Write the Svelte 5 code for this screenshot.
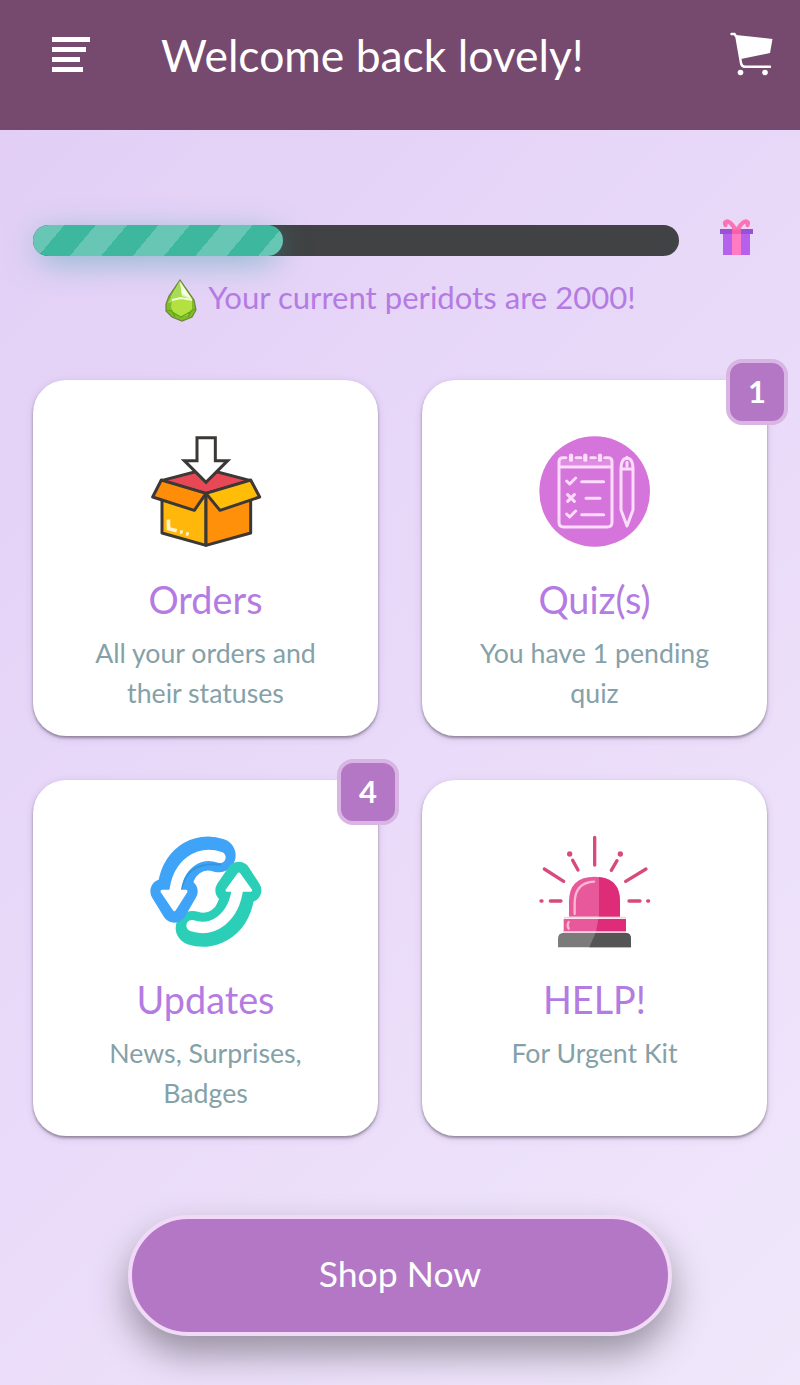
<script>
  let peridots = 2000;
  let progress = 38.7;

  let cards = [
    { icon: 'orders', title: 'Orders', text: 'All your orders and their statuses', badge: 0 },
    { icon: 'quiz', title: 'Quiz(s)', text: 'You have 1 pending quiz', badge: 1 },
    { icon: 'updates', title: 'Updates', text: 'News, Surprises, Badges', badge: 4 },
    { icon: 'help', title: 'HELP!', text: 'For Urgent Kit', badge: 0 }
  ];
</script>

<div class="page">
  <header>
    <button class="menu" aria-label="Menu">
      <svg width="40" height="38" viewBox="0 0 40 38" fill="#fff">
        <path d="M0 1h38v5H0zM0 11h34v5H0zM0 21h28v5H0zM0 31h31v5H0z" />
      </svg>
    </button>
    <h1>Welcome back lovely!</h1>
    <button class="cart" aria-label="Cart">
      <svg width="44" height="44" viewBox="0 0 44 44">
        <path d="M7 2 43.500 6 41 20 12 26z" fill="#fff" />
        <path d="M2.500 1h3l2 3 4.500 26q.5 3.700 4 3.700h25" fill="none" stroke="#fff" stroke-width="2.400" stroke-linecap="round" />
        <circle cx="11.500" cy="39.500" r="2.800" fill="#fff" />
        <circle cx="36" cy="39.500" r="2.800" fill="#fff" />
      </svg>
    </button>
  </header>

  <main>
    <div class="reward">
      <div class="track">
        <div class="fill" style="width: {progress}%"></div>
      </div>
      <svg class="gift" width="34" height="37" viewBox="0 0 34 37">
        <path d="M3 13h27v23H3z" fill="#b660ee" />
        <path d="M0 10h33v5H0z" fill="#9b51d5" />
        <path d="M12 9h9v27h-9z" fill="#ff7cc4" />
        <path d="M12 9h9v6h-9z" fill="#ef62ac" />
        <path d="M14.500 9Q10 2 6.500 2.500 4 3 5.500 6M18.500 9Q23 2 26.500 2.500 29 3 27.500 6" fill="none" stroke="#ff70b5" stroke-width="4.200" stroke-linecap="round" />
      </svg>
    </div>

    <p class="peridots">
      <svg width="34" height="43" viewBox="0 0 34 43">
        <path d="M16 1 5 17 2 25 2 32 8 38 18 42 28 38 32 31 30 21z" fill="#82bd27" stroke="#70823f" stroke-width="1.200" />
        <path d="M16 2 7 18 17 17 28 21z" fill="#d7f4a0" />
        <path d="M16 2 9 15 4 24 9 23 18 19z" fill="#a7dd54" />
        <path d="m16 3 2 12 10 5z" fill="#f5ffe5" />
        <path d="m8 22 9-2 11 2v8l-4 6-8 2-7-4-2-6z" fill="#b3e13f" />
        <path d="m8 21 9-2 11 2" fill="none" stroke="#f4ffd9" stroke-width="1.800" />
        <path d="m2 31 6 1 3 6M31 30l-4 2-3 6M8 33l9 5 9-5" fill="none" stroke="#5fa41a" stroke-width="1.200" />
      </svg>
      <span>Your current peridots are {peridots}!</span>
    </p>

    <section class="grid">
      {#each cards as card}
        <article class="card">
          {#if card.badge}
            <span class="badge">{card.badge}</span>
          {/if}

          {#if card.icon === 'orders'}
            <svg class="icon" viewBox="30 33 333 333">
              <g stroke="#3b3835" stroke-width="9" stroke-linejoin="round">
                <path d="m66 222 132-15v154L66 324z" fill="#ffb70b" />
                <path d="m198 207 134 15v102l-134 37z" fill="#ff9009" />
                <path d="m64 167 134-35 134 35-134 38z" fill="#e84855" />
                <path d="M64 165 198 205 163 256 38 216z" fill="#ff8d08" />
                <path d="M332 165 198 205l42 51 119-40z" fill="#ffbd08" />
                <path d="M171 38h55v69h37l-65 65-65-65h38z" fill="#fff" stroke-linejoin="miter" />
              </g>
              <path d="m85 284 1 27 24 6M120 320l8 2M138 326l8 2" fill="none" stroke="#fff3cc" stroke-width="11" />
            </svg>
          {:else if card.icon === 'quiz'}
            <svg class="icon" viewBox="27 33 333 333">
              <circle cx="194" cy="199.500" r="166" fill="#d574da" />
              <path d="M87 104h159v22H87z" fill="#e7a5e9" opacity=".5" />
              <g fill="none" stroke="#fbdcfb" stroke-width="9" stroke-linecap="round" stroke-linejoin="round">
                <path d="M108 98h-9q-12 0-12 12v182q0 14 14 14h131q14 0 14-14V110q0-12-12-12h-10M138 98h15M182 98h14M88 126h157" />
                <path d="M123 92v12M166 92v12M210 92v12" stroke-width="13" />
                <path d="m110 168 9 9 18-18M155 170h66M113 209l20 20M133 209l-20 20M168 220h42M110 267l9 9 18-18M155 269h66" />
                <path d="M273 134q0-34 18-34t18 34v121l-18 48-18-48zM273 132h36M291 100v-3" />
                <path d="M291 112v12" />
              </g>
            </svg>
          {:else if card.icon === 'updates'}
            <svg class="icon" viewBox="30 33 333 333">
              <g fill="none" stroke-linecap="round" stroke-linejoin="round">
                <g stroke="#2bcfb7">
                  <path d="M158 309C218 329 286 292 294 196" stroke-width="102" />
                </g>
                <g stroke="#3fa4f8">
                  <path d="M236 91C176 71 108 107 102 204" stroke-width="102" />
                  <path d="m68 199 35 57 33-57z" fill="#3fa4f8" stroke-width="74" />
                </g>
                <g stroke="#2bcfb7">
                  <path d="M293 196q-3 32-16 52" stroke-width="94" />
                  <path d="m262 196 34-50 32 50z" fill="#2bcfb7" stroke-width="72" />
                </g>
                <g stroke="#157fb5" opacity=".35" stroke-width="6">
                  <path d="M125 190q17-81 116-71" />
                </g>
                <g stroke="#fff">
                  <path d="M240 97C180 77 112 112 104 208" stroke-width="34" />
                  <path d="m66 199 37 55 35-55z" fill="#fff" stroke-width="9" />
                  <path d="M156 302C216 322 282 282 293 188" stroke-width="34" />
                  <path d="m261 196 36-49 35 49z" fill="#fff" stroke-width="9" />
                </g>
              </g>
            </svg>
          {:else}
            <svg class="icon" viewBox="27 33 333 333">
              <path d="M117 275v-45q0-75 77-75t76 75v45z" fill="#e8599b" />
              <path d="M207 156q63 7 63 74v45h-63z" fill="#df2c78" />
              <path d="M101 282h187v38H101z" fill="#e8599b" />
              <path d="M205 282h83v38h-90z" fill="#df2c78" />
              <path d="M84 367v-26q0-18 18-18h184q17 0 17 18v26z" fill="#7b7b7b" />
              <path d="M197 323h89q17 0 17 18v26H178z" fill="#555" />
              <path d="M101 278h187M101 321h187" stroke="#f9d0df" stroke-width="5" />
              <path d="M134 267v-32q0-62 58-65M116 291q-6 10 0 20" fill="none" stroke="#f9b9d2" stroke-width="7" stroke-linecap="round" />
              <g fill="none" stroke="#d84a7e" stroke-width="10" stroke-linecap="round">
                <path d="M194 37v83M43 132l58 37M348 132l-61 37M128 106l16 29M261 107l-17 29M61 228h32M297 228h33M33 228h3M353 228h3" />
              </g>
              <circle cx="119" cy="87" r="8" fill="#d84a7e" />
              <circle cx="271" cy="87" r="8" fill="#d84a7e" />
            </svg>
          {/if}

          <h2>{card.title}</h2>
          <p>{card.text}</p>
        </article>
      {/each}
    </section>

    <button class="shop">Shop Now</button>
  </main>
</div>

<style>
  :global(body) {
    margin: 0;
  }

  .page {
    height: 1385px;
    overflow: hidden;
    font-family: Lato, 'Liberation Sans', sans-serif;
    background: linear-gradient(135deg, #e1cdf5 0%, #e9daf9 50%, #f0e7fb 100%);
  }

  button {
    padding: 0;
    border: 0;
    background: none;
    font: inherit;
  }

  svg {
    display: block;
    flex: none;
    overflow: visible;
  }

  header {
    display: flex;
    align-items: center;
    box-sizing: border-box;
    height: 130px;
    padding: 0 26px 20px 52px;
    background: #754a6e;
  }

  h1 {
    flex: 1;
    margin: 0 0 0 69px;
    color: #fff;
    font-size: 44.4px;
    font-weight: 400;
    line-height: 60px;
    white-space: nowrap;
  }

  .cart {
    margin-right: 1px;
  }

  main {
    display: flex;
    flex-direction: column;
    padding: 88px 33px 0;
  }

  .reward {
    display: flex;
    align-items: center;
    gap: 41px;
    height: 38px;
  }

  .track {
    width: 646px;
    height: 31px;
    margin-top: 7px;
    border-radius: 16px;
    background: #404243;
  }

  .fill {
    height: 100%;
    border-radius: 16px;
    background: repeating-linear-gradient(130deg, #68c6b5 0 24px, #3db89e 24px 48.1px);
    box-shadow: 0 7px 33px -5px rgba(61, 160, 170, 0.75);
  }

  .peridots {
    display: flex;
    align-items: center;
    justify-content: center;
    gap: 10px;
    height: 46px;
    margin: 21px 0 57px;
    color: #b47be3;
    font-size: 31.1px;
  }

  .peridots span {
    padding-bottom: 6px;
  }

  .grid {
    display: grid;
    grid-template-columns: 345px 345px;
    grid-auto-rows: 356px;
    gap: 44px;
  }

  .card {
    position: relative;
    display: flex;
    flex-direction: column;
    align-items: center;
    box-sizing: border-box;
    padding: 56px 56px 0;
    border-radius: 33px;
    background: #fff;
    box-shadow: 0 2px 3px rgba(0, 0, 0, 0.36), 0 2px 8px rgba(90, 50, 120, 0.13);
  }

  .icon {
    width: 111px;
    height: 111px;
  }

  h2 {
    margin: 29px 0 9px;
    color: #b47be3;
    font-size: 37.8px;
    font-weight: 400;
    line-height: 48px;
  }

  .card p {
    margin: 0;
    color: #85a1a8;
    font-size: 26.7px;
    line-height: 40px;
    text-align: center;
  }

  .badge {
    position: absolute;
    top: -21px;
    right: -21px;
    width: 54px;
    height: 58px;
    border: 4px solid #d9b5e3;
    border-radius: 16px;
    background: #b377c5;
    color: #fff;
    font-size: 31px;
    font-weight: 700;
    line-height: 56px;
    text-align: center;
  }

  .shop {
    align-self: center;
    box-sizing: border-box;
    width: 544px;
    height: 121px;
    margin-top: 79px;
    padding-bottom: 4px;
    border: 4px solid #f0daf7;
    border-radius: 61px;
    background: #b377c6;
    box-shadow: 0 18px 36px rgba(0, 0, 0, 0.36);
    color: #fff;
    font-size: 35.6px;
  }
</style>
